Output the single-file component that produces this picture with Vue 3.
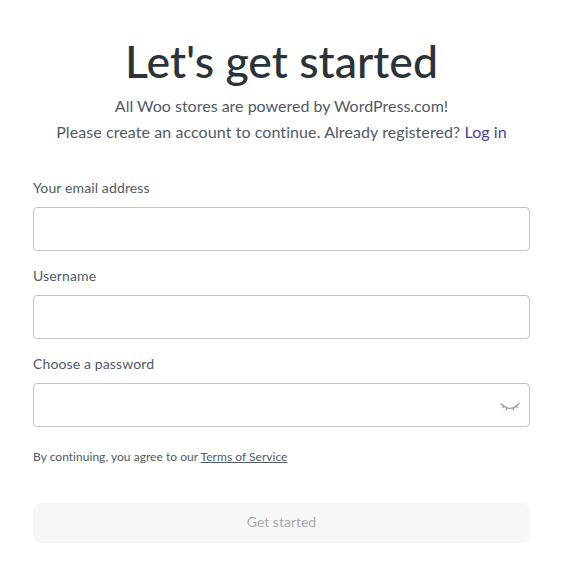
<script setup>
const fields = [
  { id: 'email', label: 'Your email address', type: 'email' },
  { id: 'username', label: 'Username', type: 'text' },
  { id: 'password', label: 'Choose a password', type: 'password', eye: true },
]
</script>

<template>
  <main class="page">
    <h1 class="title">Let's get started</h1>
    <p class="sub">All Woo stores are powered by WordPress.com!</p>
    <p class="sub sub-wide">Please create an account to continue. Already registered? <a class="login" href="#">Log in</a></p>
    <form class="form" @submit.prevent>
      <div v-for="f in fields" :key="f.id" class="field">
        <label class="label" :for="f.id">{{ f.label }}</label>
        <div class="control">
          <input :id="f.id" class="input" :type="f.type" />
          <svg v-if="f.eye" class="eye" width="20" height="11" viewBox="0 0 20 11" fill="none" stroke="#9a9da0" stroke-width="1.3">
            <path d="M2 2.5C4.5 5 7 6.3 10 6.3S15.5 5 18 2.5" />
            <path d="M2.2 2.6 0.5 2M4 4.2 2.5 6M7 5.8 6.2 8.4M13 5.8l.8 2.6M16 4.2 17.5 6M17.8 2.6 19.5 1" />
          </svg>
        </div>
      </div>
      <p class="terms">By continuing, you agree to our <a href="#" class="tos">Terms of Service</a></p>
      <button class="submit" type="button" disabled>Get started</button>
    </form>
  </main>
</template>

<style>
html, body { background: #fff; }
</style>

<style scoped>
.page {
  box-sizing: border-box;
  width: 562px;
  height: 581px;
  padding: 33px 32px 0 33px;
  font-family: Lato, "Open Sans", sans-serif;
  font-variant-ligatures: none;
  color: #505a66;
  overflow: hidden;
}
.title {
  margin: 0 0 4px;
  font-size: 44.6px;
  line-height: 56px;
  font-weight: 500;
  color: #2c3338;
  text-align: center;
}
.sub {
  margin: 0;
  font-size: 16px;
  line-height: 26px;
  text-align: center;
}
.sub-wide { letter-spacing: 0.08px; }
.login { color: #4a3f9a; text-decoration: none; }
.form { margin-top: 32px; }
.field { margin-bottom: 14px; }
.label {
  display: block;
  font-size: 14px;
  line-height: 22px;
  letter-spacing: 0.13px;
  margin-bottom: 8px;
}
.control { position: relative; }
.input {
  display: block;
  box-sizing: border-box;
  width: 100%;
  height: 44px;
  border: 1px solid #c3c4c7;
  border-radius: 4px;
  background: #fff;
  outline: none;
}
.eye { position: absolute; right: 10px; top: 19px; }
.terms {
  margin: 21px 0 0;
  font-size: 12px;
  line-height: 18px;
  letter-spacing: 0.03px;
}
.tos { color: #505a66; }
.submit {
  display: block;
  box-sizing: border-box;
  width: 100%;
  height: 40px;
  margin-top: 37px;
  padding: 0 0 3px;
  border: 0;
  border-radius: 8px;
  background: #f7f7f7;
  color: #a7aaad;
  font-family: inherit;
  font-size: 14px;
}
</style>
